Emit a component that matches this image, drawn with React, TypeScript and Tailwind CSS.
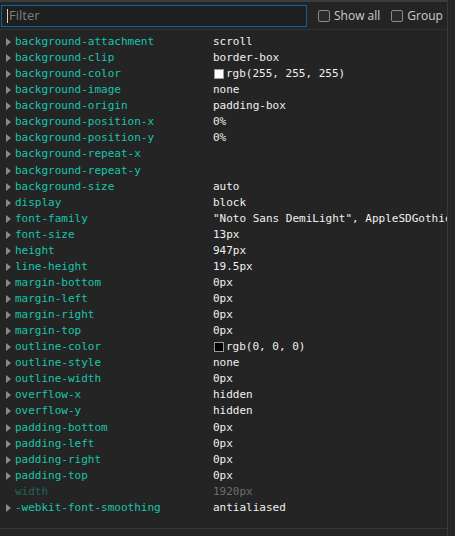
import React from "react"

interface Prop {
  name: string
  value: string
  swatch?: string
  inherited?: boolean
}

const props: Prop[] = [
  { name: "background-attachment", value: "scroll" },
  { name: "background-clip", value: "border-box" },
  { name: "background-color", value: "rgb(255, 255, 255)", swatch: "#ffffff" },
  { name: "background-image", value: "none" },
  { name: "background-origin", value: "padding-box" },
  { name: "background-position-x", value: "0%" },
  { name: "background-position-y", value: "0%" },
  { name: "background-repeat-x", value: "" },
  { name: "background-repeat-y", value: "" },
  { name: "background-size", value: "auto" },
  { name: "display", value: "block" },
  { name: "font-family", value: "\"Noto Sans DemiLight\", AppleSDGothic" },
  { name: "font-size", value: "13px" },
  { name: "height", value: "947px" },
  { name: "line-height", value: "19.5px" },
  { name: "margin-bottom", value: "0px" },
  { name: "margin-left", value: "0px" },
  { name: "margin-right", value: "0px" },
  { name: "margin-top", value: "0px" },
  { name: "outline-color", value: "rgb(0, 0, 0)", swatch: "#000000" },
  { name: "outline-style", value: "none" },
  { name: "outline-width", value: "0px" },
  { name: "overflow-x", value: "hidden" },
  { name: "overflow-y", value: "hidden" },
  { name: "padding-bottom", value: "0px" },
  { name: "padding-left", value: "0px" },
  { name: "padding-right", value: "0px" },
  { name: "padding-top", value: "0px" },
  { name: "width", value: "1920px", inherited: true },
  { name: "-webkit-font-smoothing", value: "antialiased" },
]

const Checkbox = ({ label }: { label: string }) => (
  <label className="flex items-center gap-[4px] text-[12px] text-[#cccccc] whitespace-nowrap">
    <span className="w-[12px] h-[12px] shrink-0 rounded-[2px] border border-[#8a8a8a] bg-[#2b2b2b]" />
    {label}
  </label>
)

const Row = ({ p }: { p: Prop }) => (
  <div className="flex h-[16.07px] items-center leading-[16px]">
    <span className="w-[15px] flex justify-center pl-[2px]">
      {!p.inherited && (
        <span className="w-0 h-0 border-y-[4px] border-y-transparent border-l-[5px] border-l-[#8b8b8b]" />
      )}
    </span>
    <span className={`w-[198px] ${p.inherited ? "text-[#20645b]" : "text-[#17c4ae]"}`}>{p.name}</span>
    <span
      className={`flex-1 min-w-0 flex items-center whitespace-nowrap overflow-hidden ${
        p.inherited ? "text-[#6e6e6e]" : "text-[#f0f0f0]"
      }`}
    >
      {p.swatch && (
        <span
          className="w-[10px] h-[10px] mr-[2px] ml-[1px] border border-[#9a9a9a] shrink-0"
          style={{ backgroundColor: p.swatch }}
        />
      )}
      {p.value}
    </span>
  </div>
)

export default function App() {
  return (
    <div className="w-[455px] h-[536px] bg-[#242424] flex overflow-hidden">
      <div className="w-[448px] flex flex-col border-r border-[#3a3a3a]">
        <div className="h-[2px] bg-[#3c3c3c]" />
        <div
          className="h-[28px] flex items-center border-b border-[#303030] pl-[1px] gap-[11px]"
          style={{ fontFamily: "'Open Sans', 'Noto Sans', sans-serif" }}
        >
          <div className="w-[306px] h-[22px] shrink-0 border border-[#0e639c] bg-[#1f1f1f] flex items-center pl-[5px]">
            <span className="w-px h-[14px] bg-[#d0d0d0]" />
            <span className="text-[13px] text-[#7d7d7d] ml-[1px]">Filter</span>
          </div>
          <div className="flex items-center gap-[11px]">
            <Checkbox label="Show all" />
            <Checkbox label="Group" />
          </div>
        </div>
        <div
          className="pt-[4px] text-[11px] flex-1"
          style={{ fontFamily: "'DejaVu Sans Mono', 'Liberation Mono', monospace" }}
        >
          {props.map((p) => (
            <Row key={p.name} p={p} />
          ))}
        </div>
        <div className="h-[8px] border-t border-[#383838]" />
      </div>
      <div className="flex-1 bg-[#262626]" />
    </div>
  )
}
